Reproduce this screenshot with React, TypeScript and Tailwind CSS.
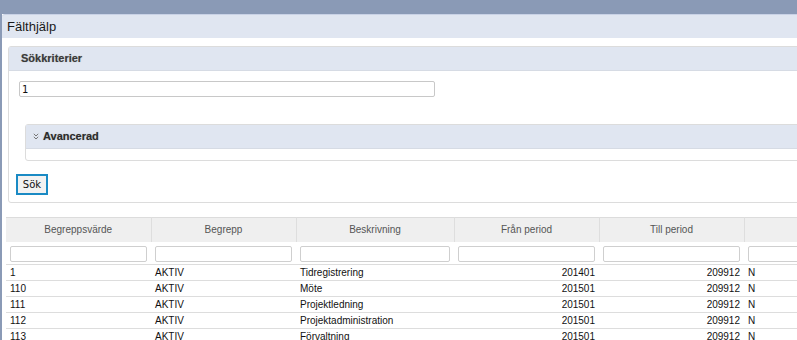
const ROWS = [
  { value: '1', term: 'AKTIV', desc: 'Tidregistrering', from: '201401', to: '209912', flag: 'N' },
  { value: '110', term: 'AKTIV', desc: 'Möte', from: '201501', to: '209912', flag: 'N' },
  { value: '111', term: 'AKTIV', desc: 'Projektledning', from: '201501', to: '209912', flag: 'N' },
  { value: '112', term: 'AKTIV', desc: 'Projektadministration', from: '201501', to: '209912', flag: 'N' },
  { value: '113', term: 'AKTIV', desc: 'Förvaltning', from: '201501', to: '209912', flag: 'N' },
]

const HEADERS = ['Begreppsvärde', 'Begrepp', 'Beskrivning', 'Från period', 'Till period', '']

function DoubleChevron() {
  return (
    <svg width="6" height="7" viewBox="0 0 6 7" className="mr-[4px]">
      <path d="M0.8 0.8 L3 3 L5.2 0.8 M0.8 3.8 L3 6 L5.2 3.8" fill="none" stroke="#777" strokeWidth="1" />
    </svg>
  )
}

export default function App() {
  return (
    <div className="w-[797px] h-[340px] overflow-hidden bg-white font-['Liberation_Sans',Arial,sans-serif] text-[#222]">
      <div className="h-[14px] bg-[#8a9ab6]" />
      <div className="border-l-2 border-[#8a9ab6] h-[326px]">
        {/* dialog title */}
        <div className="h-[24px] bg-[#e0e6f1] border-t border-[#c9d2e6] rounded-tl-[3px] flex items-center pl-[5px] text-[13px] text-[#1a1a1a]">
          Fälthjälp
        </div>

        <div className="pl-[4px] pt-[8px]">
          {/* search criteria panel */}
          <div className="ml-[2px] w-[1000px] border border-[#dcdcdc] rounded-[3px] pb-[7px]">
            <div className="h-[24px] bg-[#e0e6f1] border-b border-[#d6dbe4] flex items-center pl-[12px] text-[11px] font-bold text-[#3a3a3a] [text-shadow:0_0_1px_#999]">
              Sökkriterier
            </div>
            <div className="pl-[10px]">
              <input
                defaultValue="1"
                className="mt-[10px] block w-[416px] h-[16px] border border-[#c8c8c8] rounded-[2px] px-[2px] text-[10px] font-['DejaVu_Sans',sans-serif] text-[#111] outline-none"
              />
              <div className="mt-[27px] ml-[6px] border border-[#dcdcdc] rounded-[3px]">
                <div className="h-[24px] bg-[#e0e6f1] border-b border-[#d6dbe4] flex items-center pl-[7px] text-[11px] font-bold text-[#2c2c2c] [text-shadow:0_0_1px_#999]">
                  <DoubleChevron />
                  Avancerad
                </div>
                <div className="h-[11px]" />
              </div>
              <button className="mt-[13px] -ml-[3px] w-[32px] h-[21px] border-2 border-[#1a8ac4] bg-[#f2f2f2] text-[10px] font-['DejaVu_Sans',sans-serif] text-[#111]">
                Sök
              </button>
            </div>
          </div>

          {/* result table */}
          <table className="mt-[14px] w-[883px] table-fixed border-collapse text-[10px] text-[#111]">
            <colgroup>
              <col className="w-[145px]" />
              <col className="w-[145px]" />
              <col className="w-[158px]" />
              <col className="w-[145px]" />
              <col className="w-[145px]" />
              <col className="w-[145px]" />
            </colgroup>
            <thead>
              <tr className="h-[24px] bg-[#efefef] border-t border-[#dcdcdc]">
                {HEADERS.map((h, i) => (
                  <th key={i} className={`font-normal text-[#555] text-center ${i > 0 ? 'border-l border-[#dedede]' : ''}`}>
                    {h}
                  </th>
                ))}
              </tr>
              <tr className="h-[22px]">
                {HEADERS.map((_, i) => (
                  <th key={i} className="px-[4px] pt-[4px] pb-[2px] align-top">
                    <div className="h-[16px] border border-[#cfcfcf] rounded-[2px] bg-white" />
                  </th>
                ))}
              </tr>
            </thead>
            <tbody>
              {ROWS.map(r => (
                <tr key={r.value} className="h-[16px] border-t border-[#dddddd]">
                  <td className="px-[4px]">{r.value}</td>
                  <td className="px-[4px]">{r.term}</td>
                  <td className="px-[4px]">{r.desc}</td>
                  <td className="px-[4px] text-right">{r.from}</td>
                  <td className="px-[4px] text-right">{r.to}</td>
                  <td className="px-[4px]">{r.flag}</td>
                </tr>
              ))}
            </tbody>
          </table>
        </div>
      </div>
    </div>
  )
}
